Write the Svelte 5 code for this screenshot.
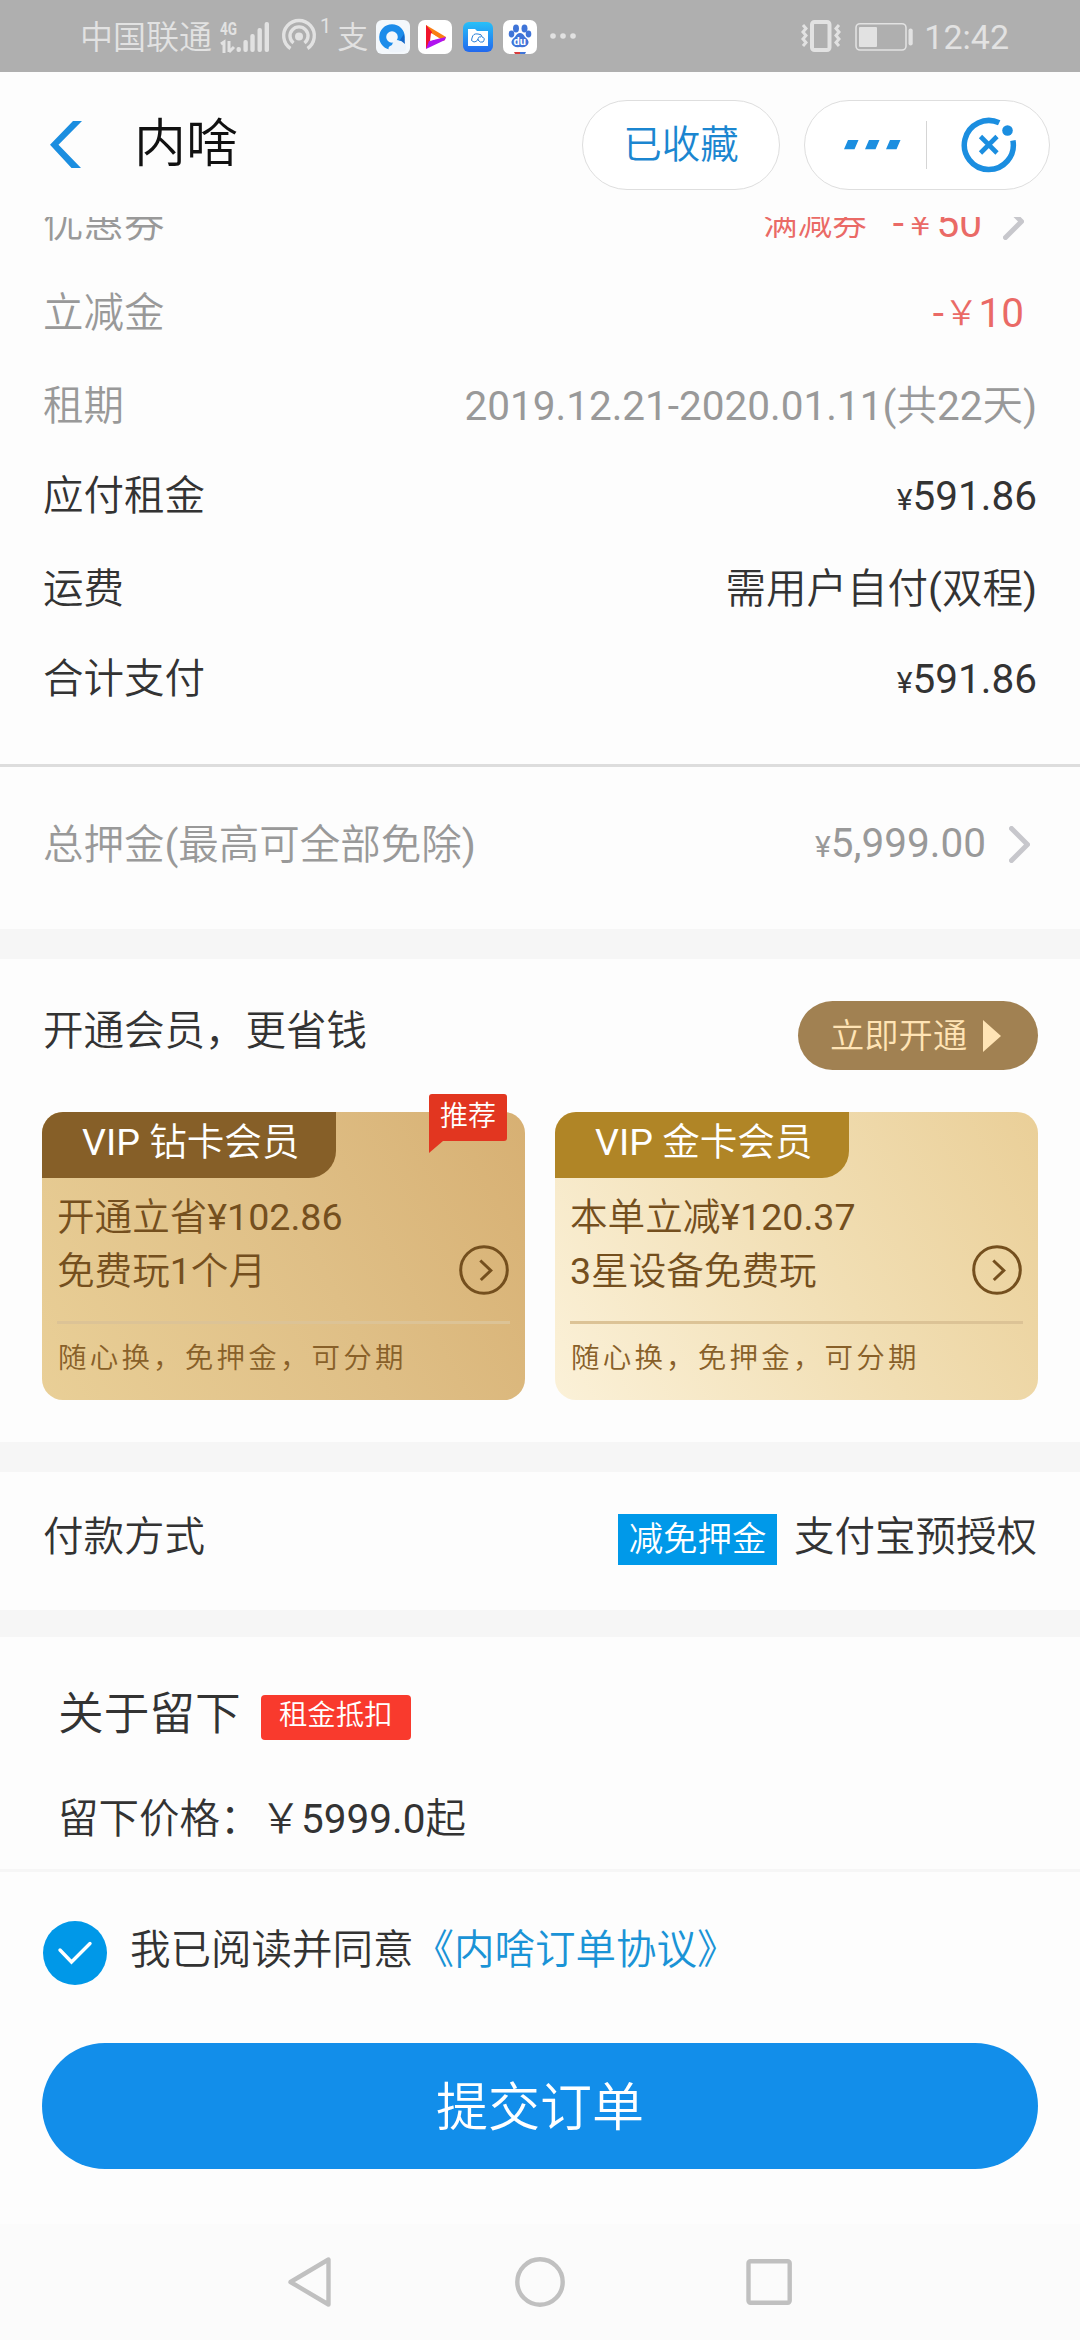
<script lang="ts">
  const dueRows = [
    { label: '应付租金', price: '591.86' },
    { label: '运费', text: '需用户自付(双程)' },
    { label: '合计支付', price: '591.86' },
  ];

  const cards = [
    {
      kind: 'diamond',
      name: 'VIP 钻卡会员',
      lines: ['开通立省¥102.86', '免费玩1个月'],
      badge: '推荐',
    },
    {
      kind: 'gold',
      name: 'VIP 金卡会员',
      lines: ['本单立减¥120.37', '3星设备免费玩'],
      badge: '',
    },
  ];

  let agreed = $state(true);
</script>

{#snippet chevron()}
  <svg class="chevron" width="21" height="37" viewBox="0 0 21 37">
    <path d="M2.5 2.5 L18.5 18.5 L2.5 34.5" />
  </svg>
{/snippet}

<div class="screen">
  <div class="status">
    <span class="carrier">中国联通</span>
    <svg class="signal" width="50" height="34" viewBox="0 0 50 34">
      <text x="0" y="15" textLength="17" lengthAdjust="spacingAndGlyphs">4G</text>
      <path class="line" d="M1 24 L4 22 V33 M9 21 V32 M9 32 L14 27" />
      <rect x="16.5" y="27" width="4.4" height="5" rx="2" />
      <rect x="23.4" y="20" width="4.4" height="12" rx="2" />
      <rect x="30.3" y="14" width="4.4" height="18" rx="2" />
      <rect x="37.5" y="8" width="4.4" height="24" rx="2" />
      <rect x="44.6" y="2" width="4.4" height="30" rx="2" />
    </svg>
    <svg class="hotspot" width="36" height="36" viewBox="0 0 36 36">
      <path d="M9.5 30.5 A15.3 15.3 0 1 1 26.5 30.5" />
      <path d="M12.5 25 A9 9 0 1 1 23.5 25" />
      <circle cx="18" cy="18.5" r="4" />
    </svg>
    <span class="sup">1</span>
    <span class="zhi">支</span>
    <svg class="app" width="34" height="34" viewBox="0 0 34 34">
      <rect width="34" height="34" rx="6" fill="#f4f8fc" />
      <circle cx="16" cy="17" r="9.3" fill="none" stroke="#1c8cea" stroke-width="7" />
      <path d="M14 32 Q10 27 16 25 Q18 18 24 21 Q31 20 30 30 Q26 33 14 32Z" fill="#eef4fb" />
      <path d="M24 20 L29 24 L28 14Z" fill="#1467c8" />
    </svg>
    <svg class="app" width="34" height="34" viewBox="0 0 34 34">
      <rect width="34" height="34" rx="7" fill="#fff" />
      <path d="M8 5 L28 17 L26 21 L8 10Z" fill="#fa7d12" />
      <path d="M8 5 L14 12 L13 23 L8 29Z" fill="#f0142c" />
      <path d="M8 29 L11 21 L28 17 L27 20Z" fill="#b012f0" />
      <path d="M13 13 L20 18 L12 21Z" fill="#fff" />
    </svg>
    <svg class="app" width="34" height="34" viewBox="0 0 34 34">
      <defs>
        <linearGradient id="cloud" x2="0" y2="1">
          <stop offset="0" stop-color="#27c0f8" />
          <stop offset="1" stop-color="#2268ee" />
        </linearGradient>
      </defs>
      <rect x="2" y="2" width="30" height="30" rx="6" fill="url(#cloud)" />
      <path d="M7 9 H14 L16 11 H27 V26 H7Z" fill="#fff" />
      <path d="M13 22 Q9 21 11 18 Q12 13 17 14 Q21 14 21 17 Q25 18 22 22 Q19 23 17 20 Q17 16 20 17 M13 22 Q16 22 17 19" fill="none" stroke="#2a80d8" />
    </svg>
    <svg class="app" width="34" height="34" viewBox="0 0 34 34">
      <rect width="34" height="34" rx="7" fill="#fff" />
      <g fill="#3f74d8">
        <ellipse cx="13" cy="8.5" rx="3" ry="4" />
        <ellipse cx="21.5" cy="8.5" rx="3" ry="4" />
        <ellipse cx="8.5" cy="14" rx="2.8" ry="3.4" />
        <ellipse cx="25.5" cy="14" rx="2.8" ry="3.4" />
        <path d="M17 13 Q20 13 22 17 Q26 20 25.5 23 Q24 28 17 27 Q10 28 8.5 23 Q8 20 12 17 Q14 13 17 13Z" />
      </g>
      <text x="10.5" y="25" class="du">du</text>
      <path d="M11 32 H17 V34 H12Z" fill="#d93c3c" />
      <path d="M17 32 H23 L22 34 H17Z" fill="#3f74d8" />
    </svg>
    <svg class="more" width="28" height="8" viewBox="0 0 28 8">
      <circle cx="4" cy="4" r="2.8" />
      <circle cx="14" cy="4" r="2.8" />
      <circle cx="24" cy="4" r="2.8" />
    </svg>
    <svg class="vibrate" width="40" height="34" viewBox="0 0 40 34">
      <rect x="11" y="3" width="17.5" height="28" rx="2.5" stroke-width="4" />
      <path d="M2 6 L5 9.5 L2 13 L5 16.5 L2 20 L5 23.5 L2 27" />
      <path d="M38 6 L35 9.5 L38 13 L35 16.5 L38 20 L35 23.5 L38 27" />
    </svg>
    <svg class="battery" width="60" height="30" viewBox="0 0 60 30">
      <rect class="shell" x="1" y="1.7" width="50" height="26.3" rx="4" />
      <rect x="4" y="5" width="18" height="20" rx="1" />
      <rect x="53.5" y="6.5" width="4.2" height="17" rx="2" />
    </svg>
    <span class="time">12:42</span>
  </div>

  <header>
    <svg class="back" width="32" height="47" viewBox="0 0 32 47">
      <path d="M0 23.7 L23 0 H32 L8.5 23.7 L31 47 H21.5Z" />
    </svg>
    <h1>内啥</h1>
    <button class="pill fav">已收藏</button>
    <div class="pill capsule">
      <svg width="58" height="10" viewBox="0 0 58 10">
        <path d="M4 0 H14.5 L10.5 9.3 H0Z M25 0 H35.5 L31.5 9.3 H21Z M46 0 H56.5 L52.5 9.3 H42Z" />
      </svg>
      <i></i>
      <svg class="close" width="56" height="56" viewBox="0 0 56 56">
        <path d="M38.2 5.8 A24.5 24.5 0 1 0 51.9 23.5" />
        <path class="cross" d="M19.5 19.5 L36 36 M36 19.5 L19.5 36" />
        <circle cx="46.5" cy="13.5" r="5.3" />
      </svg>
    </div>
  </header>

  <section class="bill">
    <div class="row muted">
      <span>优惠券</span>
      <span class="coupon"><small>满减券</small><span class="cut">-<small>￥</small>50</span>{@render chevron()}</span>
    </div>
    <div class="row muted">
      <span>立减金</span>
      <span class="minus">-<small>￥</small>10</span>
    </div>
    <div class="row muted loose">
      <span>租期</span>
      <span>2019.12.21-2020.01.11(共22天)</span>
    </div>
    {#each dueRows as row}
      <div class="row" class:loose={row.text}>
        <span>{row.label}</span>
        {#if row.price}
          <span class="price"><small>¥</small>{row.price}</span>
        {:else}
          <span>{row.text}</span>
        {/if}
      </div>
    {/each}
  </section>

  <section class="deposit muted">
    <span>总押金(最高可全部免除)</span>
    <span class="price"><small>¥</small>5,999.00</span>
    {@render chevron()}
  </section>

  <section class="member">
    <div class="member-head">
      <h2>开通会员，更省钱</h2>
      <button class="open">
        立即开通
        <svg width="18" height="32" viewBox="0 0 18 32"><path d="M0 0 L18 16 L0 32Z" /></svg>
      </button>
    </div>
    <div class="cards">
      {#each cards as card}
        <article class="card {card.kind}">
          <div class="tab">{card.name}</div>
          {#if card.badge}
            <div class="badge">{card.badge}</div>
          {/if}
          <div class="perk">
            <p>
              {#each card.lines as line}
                <span>{line}</span>
              {/each}
            </p>
            <svg width="50" height="50" viewBox="0 0 50 50">
              <circle cx="25" cy="25" r="23.3" />
              <path d="M21.3 15.5 L31.8 25.5 L21.8 35" />
            </svg>
          </div>
          <p class="foot">随心换，免押金，可分期</p>
        </article>
      {/each}
    </div>
  </section>

  <section class="pay">
    <span>付款方式</span>
    <span class="tag">减免押金</span>
    <span>支付宝预授权</span>
  </section>

  <section class="keep">
    <div class="keep-head">
      <h2>关于留下</h2>
      <span class="tag">租金抵扣</span>
    </div>
    <p>留下价格：￥5999.0起</p>
  </section>

  <section class="agree">
    <button class="check" class:on={agreed} aria-label="同意" onclick={() => (agreed = !agreed)}>
      <svg width="64" height="64" viewBox="0 0 64 64">
        <path d="M17 29 L28.5 41 L47 22.5" />
      </svg>
    </button>
    <p>我已阅读并同意<a href="#agreement">《内啥订单协议》</a></p>
  </section>

  <button class="submit">提交订单</button>

  <nav>
    <svg width="54" height="54" viewBox="0 0 54 54"><path d="M6.5 27 L44.5 4.5 V49.5Z" /></svg>
    <svg width="54" height="54" viewBox="0 0 54 54"><circle cx="27" cy="27" r="22.7" /></svg>
    <svg width="54" height="54" viewBox="0 0 54 54"><rect x="6.5" y="6.3" width="41.2" height="41.4" rx="2" /></svg>
  </nav>
</div>

<style>
  :global(body) {
    background: #fff;
  }

  .screen {
    display: flex;
    flex-direction: column;
    width: 1080px;
    height: 2340px;
    overflow: hidden;
    background: #fdfdfd;
    color: #333;
    font-family: Roboto, 'Noto Sans CJK SC DemiLight', 'Noto Sans CJK SC', sans-serif;
    font-size: 40.5px;
    font-weight: 400;
    line-height: 60px;
    white-space: nowrap;
  }

  .screen > * {
    box-sizing: border-box;
    flex-shrink: 0;
  }

  h1,
  h2,
  p {
    margin: 0;
    font-size: inherit;
    font-weight: inherit;
  }

  button {
    padding: 0;
    border: 0;
    font: inherit;
    color: inherit;
  }

  svg {
    display: block;
    flex-shrink: 0;
  }

  .status {
    display: flex;
    align-items: center;
    height: 72px;
    padding: 0 71px 0 80px;
    background: #afafaf;
    color: #e2e2e2;
    fill: #e2e2e2;
  }

  .carrier {
    font-size: 33px;
    padding-top: 4px;
  }

  .signal {
    margin-left: 8px;
    padding-top: 2px;
  }

  .signal text {
    font-size: 19px;
    font-weight: 700;
  }

  .signal .line {
    fill: none;
    stroke: #e2e2e2;
    stroke-width: 3;
  }

  .hotspot {
    margin-left: 11px;
  }

  .hotspot path {
    fill: none;
    stroke: #e2e2e2;
    stroke-width: 3.4;
  }

  .sup {
    margin-left: 3px;
    padding-bottom: 20px;
    font-size: 20px;
    line-height: 20px;
  }

  .zhi {
    margin-left: 6px;
    padding-top: 3px;
    font-size: 31px;
    font-weight: 500;
  }

  .app {
    margin: 2px 8.2px 0 0;
  }

  .zhi + .app {
    margin-left: 8px;
  }

  .du {
    fill: #fff;
    font-size: 11px;
    font-weight: 700;
  }

  .more {
    margin-left: 4px;
  }

  .vibrate {
    margin-left: auto;
    fill: none;
    stroke: #e2e2e2;
    stroke-width: 3;
  }

  .battery {
    margin: 2px 0 0 14px;
  }

  .shell {
    fill: none;
    stroke: #e2e2e2;
    stroke-width: 1.6;
  }

  .time {
    margin-left: 9px;
    padding-top: 2px;
    font-size: 34px;
  }

  header {
    display: flex;
    align-items: center;
    height: 145px;
    padding: 0 30px 0 50px;
    color: #111;
  }

  .back {
    fill: #1b8ee0;
  }

  h1 {
    margin-left: 52px;
    font-size: 52px;
  }

  .pill {
    box-sizing: border-box;
    height: 90px;
    border: 1px solid #dedede;
    border-radius: 45px;
    background: #fff;
  }

  .fav {
    width: 198px;
    margin-left: auto;
    color: #1b86d0;
    font-size: 38.5px;
  }

  .capsule {
    display: flex;
    align-items: center;
    width: 246px;
    margin-left: 24px;
    padding-left: 39px;
    fill: #1b8ee0;
  }

  .capsule i {
    width: 1px;
    height: 48px;
    margin: 0 34px 0 24px;
    background: #d5d5d5;
  }

  .close path {
    fill: none;
    stroke: #1b8ee0;
    stroke-width: 5.5;
  }

  .close .cross {
    stroke-width: 4.6;
  }

  /* first row is scrolled half under the header */
  .bill {
    height: 547px;
    overflow: hidden;
    padding: 0 43px;
  }

  .row {
    display: flex;
    justify-content: space-between;
    height: 60px;
    margin-bottom: 29.6px;
  }

  .row:first-child {
    margin-top: -24px;
  }

  .loose {
    padding-top: 3.8px;
  }

  .muted {
    color: #999;
  }

  .coupon,
  .minus {
    display: flex;
    color: #ea6a66;
  }

  .minus {
    padding-right: 13px;
  }

  .coupon small,
  .minus small {
    font-size: 34.5px;
  }

  .coupon {
    padding-right: 13px;
  }

  .cut {
    display: flex;
    margin: 0 21px 0 26px;
  }

  .cut small {
    margin: 0 -1px;
  }

  .chevron {
    fill: none;
    stroke: #c7c7cc;
    stroke-width: 5;
    stroke-linecap: round;
    stroke-linejoin: round;
  }

  .coupon .chevron {
    margin-top: 10px;
  }

  .price small {
    font-size: 30px;
  }

  .deposit {
    display: flex;
    align-items: center;
    height: 165px;
    padding: 0 50px 7px 43px;
    border-top: 3px solid #ddd;
  }

  .deposit .price {
    margin: 0 23px 0 auto;
  }

  .member {
    height: 543px;
    padding: 42px 42px 0;
    border: solid #f6f6f6;
    border-width: 30px 0;
  }

  .member-head {
    display: flex;
    justify-content: space-between;
    height: 69px;
  }

  .member-head h2 {
    padding-left: 1px;
  }

  .open {
    display: flex;
    align-items: center;
    gap: 16px;
    width: 240px;
    padding-left: 32px;
    border-radius: 35px;
    background: #a18152;
    color: #ffe4b5;
    fill: #ffe4b5;
    font-size: 34.3px;
  }

  .cards {
    display: flex;
    justify-content: space-between;
    margin-top: 42px;
  }

  .card {
    position: relative;
    box-sizing: border-box;
    width: 483px;
    height: 288px;
    border-radius: 21px;
    color: #744f1e;
    stroke: #744f1e;
    font-size: 37.6px;
  }

  .diamond {
    background: linear-gradient(62deg, #e9cf97, #dfbf86 55%, #d7b073);
  }

  .gold {
    background: linear-gradient(62deg, #fbf1d8, #f1deb3 55%, #eacf98);
  }

  .tab {
    width: 294px;
    height: 66px;
    box-sizing: border-box;
    padding-left: 40px;
    border-radius: 21px 0 27px 0;
    background: #865f28;
    color: #fff;
  }

  .gold .tab {
    background: #b08526;
  }

  .badge {
    position: absolute;
    top: -18px;
    right: 18px;
    width: 78px;
    height: 47px;
    border-radius: 3px 3px 3px 0;
    background: #e23620;
    color: #fff;
    font-size: 28px;
    line-height: 46px;
    text-align: center;
  }

  .badge::after {
    content: '';
    position: absolute;
    top: 47px;
    left: 0;
    border-top: 12px solid #e23620;
    border-right: 14px solid transparent;
  }

  .perk {
    display: flex;
    justify-content: space-between;
    align-items: flex-start;
    height: 143px;
    margin: 0 15px;
    border-bottom: 3px solid #dcc396;
  }

  .perk p {
    display: grid;
    padding-top: 12px;
    line-height: 54px;
  }

  .perk svg {
    margin: 67px 1px 0 0;
    fill: none;
    stroke-width: 3;
  }

  .foot {
    padding: 5px 0 0 16px;
    color: #886029;
    font-size: 28.5px;
    letter-spacing: 3.2px;
  }

  .pay {
    display: flex;
    align-items: center;
    height: 138px;
    padding: 0 43px 8px;
  }

  .pay .tag {
    width: 159px;
    height: 51px;
    margin: 5px 17px 0 auto;
    background: #0099e9;
    color: #fff;
    font-size: 34.4px;
    line-height: 50px;
    text-align: center;
  }

  .keep {
    height: 262px;
    padding: 48px 58px 0;
    border-top: 27px solid #f6f6f6;
    border-bottom: 3px solid #f6f6f6;
  }

  .keep-head {
    display: flex;
    align-items: center;
  }

  .keep h2 {
    font-size: 45.7px;
  }

  .keep .tag {
    width: 150px;
    height: 45px;
    margin: 4px 0 0 20px;
    border-radius: 4px;
    background: #f93a2d;
    color: #fff;
    font-size: 28.4px;
    line-height: 42px;
    text-align: center;
  }

  .keep p {
    margin-top: 44px;
  }

  .agree {
    display: flex;
    height: 171px;
    padding: 49px 43px 0;
  }

  .check {
    width: 64px;
    height: 64px;
    border-radius: 50%;
    background: #ccc;
    fill: none;
    stroke: #fff;
    stroke-width: 3.4;
    stroke-linecap: round;
  }

  .check.on {
    background: #0098e8;
  }

  .agree p {
    margin: -1px 0 0 23px;
  }

  .agree a {
    color: #1a93d6;
    text-decoration: none;
  }

  .submit {
    height: 126px;
    margin: 0 42px;
    padding-top: 5px;
    border-radius: 63px;
    background: #128eea;
    color: #fff;
    font-size: 52px;
  }

  nav {
    display: flex;
    align-items: center;
    justify-content: center;
    gap: 175px;
    height: 116px;
    margin-top: auto;
    background: #fbfbfb;
    fill: none;
    stroke: #c0c0c0;
    stroke-width: 4.4;
    stroke-linejoin: round;
  }
</style>
